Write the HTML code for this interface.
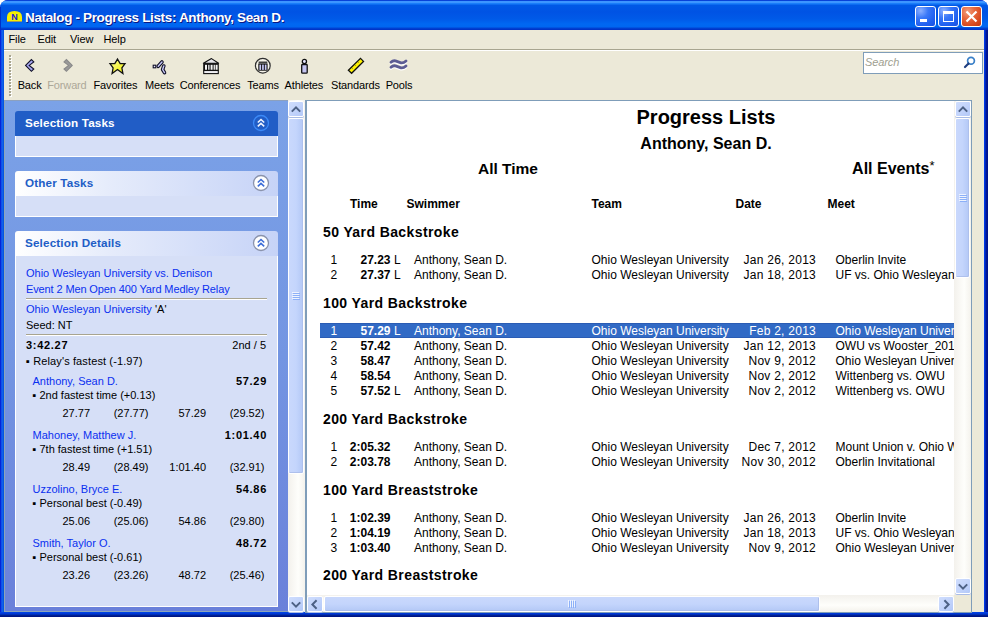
<!DOCTYPE html><html><head><meta charset="utf-8"><style>
html,body{margin:0;padding:0;}
body{width:988px;height:617px;overflow:hidden;position:relative;background:#fff;font-family:"Liberation Sans",sans-serif;}
.t{position:absolute;white-space:nowrap;}
.clip{position:absolute;overflow:hidden;}
svg{position:absolute;}
</style></head><body><div style="position:absolute;left:0px;top:0px;width:988px;height:617px;background:#0831D9;border-radius:8px 8px 0 0;"></div><div style="position:absolute;left:0px;top:24px;width:4px;height:593px;background:linear-gradient(90deg,#0019CF 0,#0A30E0 25%,#166EF5 50%,#0655E0 75%);"></div><div style="position:absolute;left:984px;top:24px;width:4px;height:593px;background:linear-gradient(90deg,#0040F0 0,#0030D8 25%,#001A9A 50%,#00108A 100%);"></div><div style="position:absolute;left:0px;top:612px;width:988px;height:5px;background:linear-gradient(180deg,#0045E8 0,#0035D0 40%,#00208F 70%,#000F80 100%);"></div><div style="position:absolute;left:0px;top:0px;width:988px;height:30px;border-radius:8px 8px 0 0;background:linear-gradient(180deg,#0842D8 0px,#0842D8 0.8px,#3D95FF 1.2px,#3D95FF 2.5px,#1A7EFA 3.5px,#0058E6 5.5px,#0053E4 12px,#005AE8 19px,#0068F2 24px,#0066F0 27px,#0045D5 28px,#0034C8 29.5px,#0034C8 30px);"></div><svg style="left:6px;top:10px" width="17" height="12" viewBox="0 0 17 12">
<path d="M1 11.5 L1 7 Q1 1 8.5 1 Q16 1 16 7 L16 11.5 Z" fill="#F6F000"/>
<path d="M1 11.5 L16 11.5" stroke="#A09860" stroke-width="1"/>
<text x="8.5" y="10" font-family="Liberation Sans" font-weight="bold" font-size="9" fill="#2020D8" text-anchor="middle">N</text>
</svg><div style="position:absolute;left:0px;top:7px;width:1px;height:23px;background:#0030C8;"></div><div class="t" style="top:11.00px;font-size:13.5px;line-height:13.5px;color:#fff;font-weight:bold;letter-spacing:-0.35px;left:25px;text-shadow:1px 1px 0 #0A1883;">Natalog - Progress Lists: Anthony, Sean D.</div><div style="position:absolute;left:915px;top:6px;width:21px;height:21px;box-sizing:border-box;border:1px solid #fff;border-radius:3px;background:radial-gradient(circle at 25% 20%,#8CB0FF 0,#3A78F8 35%,#2060F0 70%,#1A50E0 100%);"></div><div style="position:absolute;left:938px;top:6px;width:21px;height:21px;box-sizing:border-box;border:1px solid #fff;border-radius:3px;background:radial-gradient(circle at 25% 20%,#8CB0FF 0,#3A78F8 35%,#2060F0 70%,#1A50E0 100%);"></div><div style="position:absolute;left:961px;top:6px;width:21px;height:21px;box-sizing:border-box;border:1px solid #fff;border-radius:3px;background:radial-gradient(circle at 30% 25%,#F0A080 0,#E86A40 35%,#D84A20 70%,#C03810 100%);"></div><div style="position:absolute;left:920px;top:19px;width:7px;height:3px;background:#fff;"></div><div style="position:absolute;left:943px;top:11px;width:11px;height:11px;box-sizing:border-box;border:1.5px solid #fff;border-top-width:3px;"></div><svg style="left:965px;top:10px" width="13" height="13" viewBox="0 0 13 13"><path d="M1.5 1.5 L11.5 11.5 M11.5 1.5 L1.5 11.5" stroke="#fff" stroke-width="2.2"/></svg><div style="position:absolute;left:4px;top:30px;width:980px;height:70px;background:#ECE9D8;"></div><div style="position:absolute;left:4px;top:49px;width:980px;height:1px;background:#A8A590;"></div><div style="position:absolute;left:4px;top:50px;width:980px;height:1px;background:#fff;"></div><div class="t" style="top:34.00px;font-size:11px;line-height:11px;color:#000;letter-spacing:-0.1px;left:8.5px;">File</div><div class="t" style="top:34.00px;font-size:11px;line-height:11px;color:#000;letter-spacing:-0.1px;left:37.5px;">Edit</div><div class="t" style="top:34.00px;font-size:11px;line-height:11px;color:#000;letter-spacing:-0.1px;left:70px;">View</div><div class="t" style="top:34.00px;font-size:11px;line-height:11px;color:#000;letter-spacing:-0.1px;left:103.5px;">Help</div><div style="position:absolute;left:10px;top:56px;width:2px;height:2px;background:#fff;"></div><div style="position:absolute;left:9px;top:55px;width:2px;height:2px;background:#A8A590;"></div><div style="position:absolute;left:10px;top:59px;width:2px;height:2px;background:#fff;"></div><div style="position:absolute;left:9px;top:58px;width:2px;height:2px;background:#A8A590;"></div><div style="position:absolute;left:10px;top:62px;width:2px;height:2px;background:#fff;"></div><div style="position:absolute;left:9px;top:61px;width:2px;height:2px;background:#A8A590;"></div><div style="position:absolute;left:10px;top:65px;width:2px;height:2px;background:#fff;"></div><div style="position:absolute;left:9px;top:64px;width:2px;height:2px;background:#A8A590;"></div><div style="position:absolute;left:10px;top:68px;width:2px;height:2px;background:#fff;"></div><div style="position:absolute;left:9px;top:67px;width:2px;height:2px;background:#A8A590;"></div><div style="position:absolute;left:10px;top:71px;width:2px;height:2px;background:#fff;"></div><div style="position:absolute;left:9px;top:70px;width:2px;height:2px;background:#A8A590;"></div><div style="position:absolute;left:10px;top:74px;width:2px;height:2px;background:#fff;"></div><div style="position:absolute;left:9px;top:73px;width:2px;height:2px;background:#A8A590;"></div><div style="position:absolute;left:10px;top:77px;width:2px;height:2px;background:#fff;"></div><div style="position:absolute;left:9px;top:76px;width:2px;height:2px;background:#A8A590;"></div><div style="position:absolute;left:10px;top:80px;width:2px;height:2px;background:#fff;"></div><div style="position:absolute;left:9px;top:79px;width:2px;height:2px;background:#A8A590;"></div><div style="position:absolute;left:10px;top:83px;width:2px;height:2px;background:#fff;"></div><div style="position:absolute;left:9px;top:82px;width:2px;height:2px;background:#A8A590;"></div><div style="position:absolute;left:10px;top:86px;width:2px;height:2px;background:#fff;"></div><div style="position:absolute;left:9px;top:85px;width:2px;height:2px;background:#A8A590;"></div><div style="position:absolute;left:10px;top:89px;width:2px;height:2px;background:#fff;"></div><div style="position:absolute;left:9px;top:88px;width:2px;height:2px;background:#A8A590;"></div><div style="position:absolute;left:10px;top:92px;width:2px;height:2px;background:#fff;"></div><div style="position:absolute;left:9px;top:91px;width:2px;height:2px;background:#A8A590;"></div><div style="position:absolute;left:10px;top:95px;width:2px;height:2px;background:#fff;"></div><div style="position:absolute;left:9px;top:94px;width:2px;height:2px;background:#A8A590;"></div><div class="t" style="top:80.00px;font-size:11px;line-height:11px;color:#000;letter-spacing:-0.15px;left:17.7px;">Back</div><div class="t" style="top:80.00px;font-size:11px;line-height:11px;color:#ACA899;letter-spacing:-0.15px;left:47.3px;">Forward</div><div class="t" style="top:80.00px;font-size:11px;line-height:11px;color:#000;letter-spacing:-0.15px;left:93.5px;">Favorites</div><div class="t" style="top:80.00px;font-size:11px;line-height:11px;color:#000;letter-spacing:-0.15px;left:145px;">Meets</div><div class="t" style="top:80.00px;font-size:11px;line-height:11px;color:#000;letter-spacing:-0.15px;left:179.7px;">Conferences</div><div class="t" style="top:80.00px;font-size:11px;line-height:11px;color:#000;letter-spacing:-0.15px;left:247.2px;">Teams</div><div class="t" style="top:80.00px;font-size:11px;line-height:11px;color:#000;letter-spacing:-0.15px;left:284.6px;">Athletes</div><div class="t" style="top:80.00px;font-size:11px;line-height:11px;color:#000;letter-spacing:-0.15px;left:331px;">Standards</div><div class="t" style="top:80.00px;font-size:11px;line-height:11px;color:#000;letter-spacing:-0.15px;left:385.7px;">Pools</div><svg style="left:20px;top:55px" width="24" height="22" viewBox="0 0 24 22"><path d="M5.6 10.4 L11.4 4.5 L13.8 6.9 L9.2 10.4 L13.8 14 L11.4 16.3 Z" fill="#A8A8F2" stroke="#101028" stroke-width="1.1" stroke-linejoin="miter"/></svg><svg style="left:58px;top:55px" width="24" height="22" viewBox="0 0 24 22"><path d="M14.2 10.4 L8.4 4.5 L6 6.9 L10.6 10.4 L6 14 L8.4 16.3 Z" fill="#9A9A9A" stroke="#8A8A8A" stroke-width="1.1"/></svg><svg style="left:106px;top:55px" width="24" height="22" viewBox="0 0 24 22"><defs><linearGradient id="sg" x1="0" y1="0" x2="1" y2="1"><stop offset="0" stop-color="#FAFA9A"/><stop offset="1" stop-color="#F0F000"/></linearGradient></defs><path d="M11.5 4.1 L14.2 8.6 L19 8.6 L15.9 13 L16.9 18.6 L11.5 14.6 L6.1 18.6 L7.1 13 L4 8.6 L8.8 8.6 Z" fill="url(#sg)" stroke="#101010" stroke-width="1.3" stroke-linejoin="miter"/></svg><svg style="left:148px;top:55px" width="24" height="22" viewBox="0 0 24 22"><rect x="5.2" y="10.2" width="2.6" height="2.6" fill="#E8E8FF" stroke="#101028" stroke-width="1.1"/><path d="M10.2 11.3 L14 7" fill="none" stroke="#101028" stroke-width="3.6" stroke-linecap="round"/><path d="M10.2 11.3 L14 7" fill="none" stroke="#C8C8F8" stroke-width="1.4" stroke-linecap="round"/><path d="M15.8 11 L14.6 14.5 L16.5 17.6" fill="none" stroke="#101028" stroke-width="3.6" stroke-linecap="round" stroke-linejoin="round"/><path d="M15.8 11 L14.6 14.5 L16.5 17.6" fill="none" stroke="#C8C8F8" stroke-width="1.4" stroke-linecap="round" stroke-linejoin="round"/></svg><svg style="left:199px;top:55px" width="24" height="22" viewBox="0 0 24 22"><path d="M12.5 3.6 L19.6 8.2 L4.4 8.2 Z" fill="#E8E8EC" stroke="#101010" stroke-width="1.1" stroke-linejoin="round"/><rect x="4.2" y="8.2" width="15.6" height="7.3" fill="#101010"/><rect x="6" y="9.8" width="2" height="5" fill="#F4F4F4"/><rect x="9.2" y="9.8" width="1.3" height="5" fill="#F4F4F4"/><rect x="11.6" y="9.8" width="2" height="5" fill="#F4F4F4"/><rect x="14.6" y="9.8" width="1.3" height="5" fill="#F4F4F4"/><rect x="16.6" y="9.8" width="2" height="5" fill="#F4F4F4"/><rect x="4.7" y="15.5" width="14.6" height="3.1" fill="#F0F0F4" stroke="#101010" stroke-width="1.1"/></svg><svg style="left:251px;top:55px" width="24" height="22" viewBox="0 0 24 22"><circle cx="11.8" cy="10.7" r="7.4" fill="#F6F4EA" stroke="#303030" stroke-width="1.2"/><rect x="7.3" y="8.6" width="9.3" height="7.1" fill="#101010"/><rect x="7.6" y="6.5" width="8.7" height="2.1" fill="#404040"/><rect x="8.4" y="9.6" width="1.7" height="5.3" fill="#C8C8F4"/><rect x="11.1" y="9.6" width="1.7" height="5.3" fill="#C8C8F4"/><rect x="13.8" y="9.6" width="1.7" height="5.3" fill="#C8C8F4"/></svg><svg style="left:294px;top:55px" width="24" height="22" viewBox="0 0 24 22"><circle cx="10.4" cy="6.5" r="2.1" fill="#E8E8FF" stroke="#101010" stroke-width="1.3"/><rect x="7.7" y="9.5" width="5.5" height="8.7" rx="0.8" fill="#C4C4F0" stroke="#101010" stroke-width="1.3"/></svg><svg style="left:343px;top:55px" width="24" height="22" viewBox="0 0 24 22"><path d="M17.5 3.4 L20.5 6.4 L8.6 18.3 L5.4 15.3 Z" fill="#FFF200" stroke="#101010" stroke-width="1.3" stroke-linejoin="miter"/><path d="M9 13 L10 14 M12 10 L13 11 M15 7 L16 8" stroke="#8A8A40" stroke-width="0.8"/></svg><svg style="left:386px;top:55px" width="24" height="22" viewBox="0 0 24 22"><path d="M5 8.6 Q7 6.6 9.5 7.2 Q12.5 8.3 15 9.2 Q17.5 9.6 20 7.2" fill="none" stroke="#fff" stroke-width="2.6" stroke-linecap="round"/><path d="M5 13.6 Q7 11.6 9.5 12.2 Q12.5 13.3 15 14.2 Q17.5 14.6 20 12.2" fill="none" stroke="#fff" stroke-width="2.6" stroke-linecap="round"/><path d="M5 7.3 Q7 5.3 9.5 5.9 Q12.5 7 15 7.9 Q17.5 8.3 20 5.9" fill="none" stroke="#5C5C94" stroke-width="2.8" stroke-linecap="round"/><path d="M5 12.3 Q7 10.3 9.5 10.9 Q12.5 12 15 12.9 Q17.5 13.3 20 10.9" fill="none" stroke="#5C5C94" stroke-width="2.8" stroke-linecap="round"/></svg><div style="position:absolute;left:863px;top:52px;width:120px;height:22px;box-sizing:border-box;border:1px solid #7F9DB9;background:#fff;"></div><div class="t" style="top:57.00px;font-size:11px;line-height:11px;color:#A0A090;font-style:italic;letter-spacing:-0.1px;left:865px;">Search</div><svg style="left:962px;top:55px" width="15" height="15" viewBox="0 0 15 15"><circle cx="9" cy="5.8" r="3.4" fill="none" stroke="#3A80C8" stroke-width="1.7"/><path d="M6.5 8.5 L3 12" stroke="#1E3E80" stroke-width="2.2" stroke-linecap="round"/></svg><div style="position:absolute;left:4px;top:100px;width:284px;height:512px;background:linear-gradient(180deg,#7BA2E7 0,#7395E2 50%,#6A80DA 100%);"></div><div style="position:absolute;left:4px;top:100px;width:1px;height:512px;background:#8DA4B8;"></div><div style="position:absolute;left:4px;top:100px;width:284px;height:1px;background:#8CA0BE;"></div><div style="position:absolute;left:4px;top:611px;width:284px;height:1px;background:#8DA4B8;"></div><div style="position:absolute;left:15px;top:111px;width:263px;height:25px;border-radius:3px 3px 0 0;background:#215DC6;"></div><div class="t" style="top:117.00px;font-size:11.7px;line-height:11.7px;color:#fff;font-weight:bold;letter-spacing:0.15px;left:25px;">Selection Tasks</div><svg style="left:252px;top:114px" width="18" height="18" viewBox="0 0 18 18"><circle cx="9" cy="9" r="7.5" fill="#215DC6" stroke="#3C8AF8" stroke-width="1.3"/><path d="M5.8 8.5 L9 5.5 L12.2 8.5 M5.8 12.3 L9 9.3 L12.2 12.3" fill="none" stroke="#F0F4FF" stroke-width="1.6"/></svg><div style="position:absolute;left:15px;top:136px;width:263px;height:21px;box-sizing:border-box;border:1px solid #fff;border-top:0;background:#D6DFF7;"></div><div style="position:absolute;left:15px;top:171px;width:263px;height:25px;border-radius:3px 3px 0 0;background:linear-gradient(90deg,#FFFFFF 0,#E6ECFB 35%,#C6D3F7 100%);"></div><div class="t" style="top:177.00px;font-size:11.7px;line-height:11.7px;color:#215DC6;font-weight:bold;letter-spacing:0.15px;left:25px;">Other Tasks</div><svg style="left:252px;top:174px" width="18" height="18" viewBox="0 0 18 18"><circle cx="9" cy="9" r="7.5" fill="#FFFFFF" stroke="#8A93AC" stroke-width="1.3"/><path d="M5.8 8.5 L9 5.5 L12.2 8.5 M5.8 12.3 L9 9.3 L12.2 12.3" fill="none" stroke="#3E6ED8" stroke-width="1.6"/></svg><div style="position:absolute;left:15px;top:196px;width:263px;height:21px;box-sizing:border-box;border:1px solid #fff;border-top:0;background:#D6DFF7;"></div><div style="position:absolute;left:15px;top:231px;width:263px;height:25px;border-radius:3px 3px 0 0;background:linear-gradient(90deg,#FFFFFF 0,#E6ECFB 35%,#C6D3F7 100%);"></div><div class="t" style="top:237.00px;font-size:11.7px;line-height:11.7px;color:#215DC6;font-weight:bold;letter-spacing:0.15px;left:25px;">Selection Details</div><svg style="left:252px;top:234px" width="18" height="18" viewBox="0 0 18 18"><circle cx="9" cy="9" r="7.5" fill="#FFFFFF" stroke="#8A93AC" stroke-width="1.3"/><path d="M5.8 8.5 L9 5.5 L12.2 8.5 M5.8 12.3 L9 9.3 L12.2 12.3" fill="none" stroke="#3E6ED8" stroke-width="1.6"/></svg><div style="position:absolute;left:15px;top:256px;width:263px;height:351px;box-sizing:border-box;border:1px solid #fff;border-top:0;background:#D6DFF7;"></div><div class="t" style="top:268.00px;font-size:11px;line-height:11px;color:#0A30F0;letter-spacing:0px;left:26px;">Ohio Wesleyan University vs. Denison</div><div class="t" style="top:284.00px;font-size:11px;line-height:11px;color:#0A30F0;letter-spacing:-0.12px;left:26px;">Event 2 Men Open 400 Yard Medley Relay</div><div style="position:absolute;left:26px;top:298px;width:241px;height:1px;background:#A8A490;"></div><div style="position:absolute;left:26px;top:299px;width:241px;height:1px;background:#fff;"></div><div class="t" style="top:304.00px;font-size:11px;line-height:11px;color:#0A30F0;letter-spacing:0px;left:26px;">Ohio Wesleyan University</div><div class="t" style="top:304.00px;font-size:11px;line-height:11px;color:#000;letter-spacing:0px;left:155px;">'A'</div><div class="t" style="top:320.00px;font-size:11px;line-height:11px;color:#000;letter-spacing:0px;left:26px;">Seed: NT</div><div style="position:absolute;left:26px;top:334px;width:241px;height:1px;background:#A8A490;"></div><div style="position:absolute;left:26px;top:335px;width:241px;height:1px;background:#fff;"></div><div class="t" style="top:340.00px;font-size:11px;line-height:11px;color:#000;font-weight:bold;letter-spacing:0.7px;left:26px;">3:42.27</div><div class="t" style="top:340.00px;font-size:11px;line-height:11px;color:#000;letter-spacing:0px;left:-334px;width:600px;text-align:right;">2nd / 5</div><div class="t" style="top:356.00px;font-size:11px;line-height:11px;color:#000;letter-spacing:0.12px;left:26px;">&#9642; Relay's fastest (-1.97)</div><div class="t" style="top:376.00px;font-size:11px;line-height:11px;color:#0A30F0;letter-spacing:0px;left:32.5px;">Anthony, Sean D.</div><div class="t" style="top:376.00px;font-size:11px;line-height:11px;color:#000;font-weight:bold;letter-spacing:0.7px;left:-333px;width:600px;text-align:right;">57.29</div><div class="t" style="top:390.00px;font-size:11px;line-height:11px;color:#000;letter-spacing:0px;left:32.5px;">&#9642; 2nd fastest time (+0.13)</div><div class="t" style="top:408.00px;font-size:11px;line-height:11px;color:#000;letter-spacing:0px;left:-510px;width:600px;text-align:right;">27.77</div><div class="t" style="top:408.00px;font-size:11px;line-height:11px;color:#000;letter-spacing:0px;left:-451.5px;width:600px;text-align:right;">(27.77)</div><div class="t" style="top:408.00px;font-size:11px;line-height:11px;color:#000;letter-spacing:0px;left:-394px;width:600px;text-align:right;">57.29</div><div class="t" style="top:408.00px;font-size:11px;line-height:11px;color:#000;letter-spacing:0px;left:-335.5px;width:600px;text-align:right;">(29.52)</div><div class="t" style="top:430.00px;font-size:11px;line-height:11px;color:#0A30F0;letter-spacing:0px;left:32.5px;">Mahoney, Matthew J.</div><div class="t" style="top:430.00px;font-size:11px;line-height:11px;color:#000;font-weight:bold;letter-spacing:0.7px;left:-333px;width:600px;text-align:right;">1:01.40</div><div class="t" style="top:444.00px;font-size:11px;line-height:11px;color:#000;letter-spacing:0px;left:32.5px;">&#9642; 7th fastest time (+1.51)</div><div class="t" style="top:462.00px;font-size:11px;line-height:11px;color:#000;letter-spacing:0px;left:-510px;width:600px;text-align:right;">28.49</div><div class="t" style="top:462.00px;font-size:11px;line-height:11px;color:#000;letter-spacing:0px;left:-451.5px;width:600px;text-align:right;">(28.49)</div><div class="t" style="top:462.00px;font-size:11px;line-height:11px;color:#000;letter-spacing:0px;left:-394px;width:600px;text-align:right;">1:01.40</div><div class="t" style="top:462.00px;font-size:11px;line-height:11px;color:#000;letter-spacing:0px;left:-335.5px;width:600px;text-align:right;">(32.91)</div><div class="t" style="top:484.00px;font-size:11px;line-height:11px;color:#0A30F0;letter-spacing:0px;left:32.5px;">Uzzolino, Bryce E.</div><div class="t" style="top:484.00px;font-size:11px;line-height:11px;color:#000;font-weight:bold;letter-spacing:0.7px;left:-333px;width:600px;text-align:right;">54.86</div><div class="t" style="top:498.00px;font-size:11px;line-height:11px;color:#000;letter-spacing:0px;left:32.5px;">&#9642; Personal best (-0.49)</div><div class="t" style="top:516.00px;font-size:11px;line-height:11px;color:#000;letter-spacing:0px;left:-510px;width:600px;text-align:right;">25.06</div><div class="t" style="top:516.00px;font-size:11px;line-height:11px;color:#000;letter-spacing:0px;left:-451.5px;width:600px;text-align:right;">(25.06)</div><div class="t" style="top:516.00px;font-size:11px;line-height:11px;color:#000;letter-spacing:0px;left:-394px;width:600px;text-align:right;">54.86</div><div class="t" style="top:516.00px;font-size:11px;line-height:11px;color:#000;letter-spacing:0px;left:-335.5px;width:600px;text-align:right;">(29.80)</div><div class="t" style="top:538.00px;font-size:11px;line-height:11px;color:#0A30F0;letter-spacing:0px;left:32.5px;">Smith, Taylor O.</div><div class="t" style="top:538.00px;font-size:11px;line-height:11px;color:#000;font-weight:bold;letter-spacing:0.7px;left:-333px;width:600px;text-align:right;">48.72</div><div class="t" style="top:552.00px;font-size:11px;line-height:11px;color:#000;letter-spacing:0px;left:32.5px;">&#9642; Personal best (-0.61)</div><div class="t" style="top:570.00px;font-size:11px;line-height:11px;color:#000;letter-spacing:0px;left:-510px;width:600px;text-align:right;">23.26</div><div class="t" style="top:570.00px;font-size:11px;line-height:11px;color:#000;letter-spacing:0px;left:-451.5px;width:600px;text-align:right;">(23.26)</div><div class="t" style="top:570.00px;font-size:11px;line-height:11px;color:#000;letter-spacing:0px;left:-394px;width:600px;text-align:right;">48.72</div><div class="t" style="top:570.00px;font-size:11px;line-height:11px;color:#000;letter-spacing:0px;left:-335.5px;width:600px;text-align:right;">(25.46)</div><div style="position:absolute;left:288px;top:100px;width:17px;height:512px;background:linear-gradient(90deg,#F3F1EC 0,#FEFEFB 60%,#F4F2EC 100%);"></div><div style="position:absolute;left:288px;top:101px;width:16px;height:16px;box-sizing:border-box;border:1px solid #fff;border-radius:2px;background:linear-gradient(135deg,#CFDDFD 0,#C3D4FB 50%,#B2C8F8 100%);box-shadow:0 1px 0 #A9BCE6;"></div><svg style="left:289.0px;top:102.5px" width="14" height="13" viewBox="0 0 14 13"><path d="M2.8 8.6 L7 4.4 L11.2 8.6" fill="none" stroke="#4D6185" stroke-width="2"/></svg><div style="position:absolute;left:288px;top:118px;width:16px;height:356px;box-sizing:border-box;border:1px solid #fff;border-radius:2px;background:linear-gradient(90deg,#C9D8FC 0,#C4D5FC 50%,#B3C8F6 100%);box-shadow:inset -1px -1px 0 #AEC0EC;"></div><div style="position:absolute;left:292px;top:292px;width:7px;height:1px;background:#EEF3FE;"></div><div style="position:absolute;left:293px;top:293px;width:7px;height:1px;background:#8CB0F8;"></div><div style="position:absolute;left:292px;top:294px;width:7px;height:1px;background:#EEF3FE;"></div><div style="position:absolute;left:293px;top:295px;width:7px;height:1px;background:#8CB0F8;"></div><div style="position:absolute;left:292px;top:296px;width:7px;height:1px;background:#EEF3FE;"></div><div style="position:absolute;left:293px;top:297px;width:7px;height:1px;background:#8CB0F8;"></div><div style="position:absolute;left:292px;top:298px;width:7px;height:1px;background:#EEF3FE;"></div><div style="position:absolute;left:293px;top:299px;width:7px;height:1px;background:#8CB0F8;"></div><div style="position:absolute;left:288px;top:596px;width:16px;height:16px;box-sizing:border-box;border:1px solid #fff;border-radius:2px;background:linear-gradient(135deg,#CFDDFD 0,#C3D4FB 50%,#B2C8F8 100%);box-shadow:0 1px 0 #A9BCE6;"></div><svg style="left:289.0px;top:597.5px" width="14" height="13" viewBox="0 0 14 13"><path d="M2.8 4.4 L7 8.6 L11.2 4.4" fill="none" stroke="#4D6185" stroke-width="2"/></svg><div style="position:absolute;left:305px;top:100px;width:667px;height:513px;box-sizing:border-box;border:1px solid #7F9DB9;border-left-width:2px;background:#fff;"></div><div style="position:absolute;left:972px;top:100px;width:12px;height:512px;background:#ECE9D8;"></div><div style="position:absolute;left:954px;top:101px;width:17px;height:494px;background:linear-gradient(90deg,#F3F1EC 0,#FEFEFB 60%,#F4F2EC 100%);"></div><div style="position:absolute;left:955px;top:101px;width:16px;height:16px;box-sizing:border-box;border:1px solid #fff;border-radius:2px;background:linear-gradient(135deg,#CFDDFD 0,#C3D4FB 50%,#B2C8F8 100%);box-shadow:0 1px 0 #A9BCE6;"></div><svg style="left:956.0px;top:102.5px" width="14" height="13" viewBox="0 0 14 13"><path d="M2.8 8.6 L7 4.4 L11.2 8.6" fill="none" stroke="#4D6185" stroke-width="2"/></svg><div style="position:absolute;left:955px;top:118px;width:15px;height:160px;box-sizing:border-box;border:1px solid #fff;border-radius:2px;background:linear-gradient(90deg,#C9D8FC 0,#C4D5FC 50%,#B3C8F6 100%);box-shadow:inset -1px -1px 0 #AEC0EC;"></div><div style="position:absolute;left:959px;top:194px;width:7px;height:1px;background:#EEF3FE;"></div><div style="position:absolute;left:960px;top:195px;width:7px;height:1px;background:#8CB0F8;"></div><div style="position:absolute;left:959px;top:196px;width:7px;height:1px;background:#EEF3FE;"></div><div style="position:absolute;left:960px;top:197px;width:7px;height:1px;background:#8CB0F8;"></div><div style="position:absolute;left:959px;top:198px;width:7px;height:1px;background:#EEF3FE;"></div><div style="position:absolute;left:960px;top:199px;width:7px;height:1px;background:#8CB0F8;"></div><div style="position:absolute;left:959px;top:200px;width:7px;height:1px;background:#EEF3FE;"></div><div style="position:absolute;left:960px;top:201px;width:7px;height:1px;background:#8CB0F8;"></div><div style="position:absolute;left:955px;top:578px;width:16px;height:16px;box-sizing:border-box;border:1px solid #fff;border-radius:2px;background:linear-gradient(135deg,#CFDDFD 0,#C3D4FB 50%,#B2C8F8 100%);box-shadow:0 1px 0 #A9BCE6;"></div><svg style="left:956.0px;top:579.5px" width="14" height="13" viewBox="0 0 14 13"><path d="M2.8 4.4 L7 8.6 L11.2 4.4" fill="none" stroke="#4D6185" stroke-width="2"/></svg><div style="position:absolute;left:307px;top:595px;width:647px;height:17px;background:linear-gradient(180deg,#F3F1EC 0,#FEFEFB 60%,#F4F2EC 100%);"></div><div style="position:absolute;left:307px;top:596px;width:16px;height:16px;box-sizing:border-box;border:1px solid #fff;border-radius:2px;background:linear-gradient(135deg,#CFDDFD 0,#C3D4FB 50%,#B2C8F8 100%);box-shadow:0 1px 0 #A9BCE6;"></div><svg style="left:308.0px;top:597.5px" width="14" height="13" viewBox="0 0 14 13"><path d="M8.6 2.3 L4.4 6.5 L8.6 10.7" fill="none" stroke="#4D6185" stroke-width="2"/></svg><div style="position:absolute;left:324px;top:596px;width:496px;height:16px;box-sizing:border-box;border:1px solid #fff;border-radius:2px;background:linear-gradient(180deg,#C9D8FC 0,#C4D5FC 50%,#B3C8F6 100%);box-shadow:inset -1px -1px 0 #AEC0EC;"></div><div style="position:absolute;left:568px;top:600px;width:1px;height:7px;background:#EEF3FE;"></div><div style="position:absolute;left:569px;top:601px;width:1px;height:7px;background:#8CB0F8;"></div><div style="position:absolute;left:570px;top:600px;width:1px;height:7px;background:#EEF3FE;"></div><div style="position:absolute;left:571px;top:601px;width:1px;height:7px;background:#8CB0F8;"></div><div style="position:absolute;left:572px;top:600px;width:1px;height:7px;background:#EEF3FE;"></div><div style="position:absolute;left:573px;top:601px;width:1px;height:7px;background:#8CB0F8;"></div><div style="position:absolute;left:574px;top:600px;width:1px;height:7px;background:#EEF3FE;"></div><div style="position:absolute;left:575px;top:601px;width:1px;height:7px;background:#8CB0F8;"></div><div style="position:absolute;left:938px;top:596px;width:16px;height:16px;box-sizing:border-box;border:1px solid #fff;border-radius:2px;background:linear-gradient(135deg,#CFDDFD 0,#C3D4FB 50%,#B2C8F8 100%);box-shadow:0 1px 0 #A9BCE6;"></div><svg style="left:939.0px;top:597.5px" width="14" height="13" viewBox="0 0 14 13"><path d="M5.4 2.3 L9.6 6.5 L5.4 10.7" fill="none" stroke="#4D6185" stroke-width="2"/></svg><div style="position:absolute;left:954px;top:595px;width:17px;height:17px;background:#ECE9D8;"></div><div class="clip" style="left:307px;top:101px;width:647px;height:494px;"><div class="t" style="top:6.00px;font-size:20px;line-height:20px;color:#000;font-weight:bold;left:-101px;width:1000px;text-align:center;">Progress Lists</div><div class="t" style="top:35.00px;font-size:16px;line-height:16px;color:#000;font-weight:bold;left:-101px;width:1000px;text-align:center;">Anthony, Sean D.</div><div class="t" style="top:60.00px;font-size:15.5px;line-height:15.5px;color:#000;font-weight:bold;left:-299px;width:1000px;text-align:center;">All Time</div><div class="t" style="top:60.00px;font-size:16px;line-height:16px;color:#000;font-weight:bold;left:27.5px;width:600px;text-align:right;">All Events<span style="font-size:13px;font-weight:normal;position:relative;top:-4px">*</span></div><div class="t" style="top:97.00px;font-size:12px;line-height:12px;color:#000;font-weight:bold;left:43px;">Time</div><div class="t" style="top:97.00px;font-size:12px;line-height:12px;color:#000;font-weight:bold;left:99.5px;">Swimmer</div><div class="t" style="top:97.00px;font-size:12px;line-height:12px;color:#000;font-weight:bold;left:284.5px;">Team</div><div class="t" style="top:97.00px;font-size:12px;line-height:12px;color:#000;font-weight:bold;left:428.5px;">Date</div><div class="t" style="top:97.00px;font-size:12px;line-height:12px;color:#000;font-weight:bold;left:520.5px;">Meet</div><div class="t" style="top:124.00px;font-size:14px;line-height:14px;color:#000;font-weight:bold;letter-spacing:0.4px;left:16px;">50 Yard Backstroke</div><div class="t" style="top:153.00px;font-size:12px;line-height:12px;color:#000;left:23.5px;">1</div><div class="t" style="top:153.00px;font-size:12px;line-height:12px;color:#000;font-weight:bold;left:-516.5px;width:600px;text-align:right;">27.23</div><div class="t" style="top:153.00px;font-size:12px;line-height:12px;color:#000;left:87px;">L</div><div class="t" style="top:153.00px;font-size:12px;line-height:12px;color:#000;left:107px;">Anthony, Sean D.</div><div class="t" style="top:153.00px;font-size:12px;line-height:12px;color:#000;left:284.5px;">Ohio Wesleyan University</div><div class="t" style="top:153.00px;font-size:12px;line-height:12px;color:#000;letter-spacing:0.25px;left:-91px;width:600px;text-align:right;">Jan 26, 2013</div><div class="t" style="top:153.00px;font-size:12px;line-height:12px;color:#000;left:528.5px;">Oberlin Invite</div><div class="t" style="top:168.00px;font-size:12px;line-height:12px;color:#000;left:23.5px;">2</div><div class="t" style="top:168.00px;font-size:12px;line-height:12px;color:#000;font-weight:bold;left:-516.5px;width:600px;text-align:right;">27.37</div><div class="t" style="top:168.00px;font-size:12px;line-height:12px;color:#000;left:87px;">L</div><div class="t" style="top:168.00px;font-size:12px;line-height:12px;color:#000;left:107px;">Anthony, Sean D.</div><div class="t" style="top:168.00px;font-size:12px;line-height:12px;color:#000;left:284.5px;">Ohio Wesleyan University</div><div class="t" style="top:168.00px;font-size:12px;line-height:12px;color:#000;letter-spacing:0.25px;left:-91px;width:600px;text-align:right;">Jan 18, 2013</div><div class="t" style="top:168.00px;font-size:12px;line-height:12px;color:#000;left:528.5px;">UF vs. Ohio Wesleyan</div><div class="t" style="top:195.00px;font-size:14px;line-height:14px;color:#000;font-weight:bold;letter-spacing:0.4px;left:16px;">100 Yard Backstroke</div><div style="position:absolute;left:13px;top:222px;width:634px;height:15px;background:#316AC5;box-shadow:inset 0 1px 0 #2A5CB4, inset 0 -1px 0 #2A5CB4;"></div><div class="t" style="top:224.00px;font-size:12px;line-height:12px;color:#fff;left:23.5px;">1</div><div class="t" style="top:224.00px;font-size:12px;line-height:12px;color:#fff;font-weight:bold;left:-516.5px;width:600px;text-align:right;">57.29</div><div class="t" style="top:224.00px;font-size:12px;line-height:12px;color:#fff;left:87px;">L</div><div class="t" style="top:224.00px;font-size:12px;line-height:12px;color:#fff;left:107px;">Anthony, Sean D.</div><div class="t" style="top:224.00px;font-size:12px;line-height:12px;color:#fff;left:284.5px;">Ohio Wesleyan University</div><div class="t" style="top:224.00px;font-size:12px;line-height:12px;color:#fff;letter-spacing:0.25px;left:-91px;width:600px;text-align:right;">Feb 2, 2013</div><div class="t" style="top:224.00px;font-size:12px;line-height:12px;color:#fff;left:528.5px;">Ohio Wesleyan University</div><div class="t" style="top:239.00px;font-size:12px;line-height:12px;color:#000;left:23.5px;">2</div><div class="t" style="top:239.00px;font-size:12px;line-height:12px;color:#000;font-weight:bold;left:-516.5px;width:600px;text-align:right;">57.42</div><div class="t" style="top:239.00px;font-size:12px;line-height:12px;color:#000;left:107px;">Anthony, Sean D.</div><div class="t" style="top:239.00px;font-size:12px;line-height:12px;color:#000;left:284.5px;">Ohio Wesleyan University</div><div class="t" style="top:239.00px;font-size:12px;line-height:12px;color:#000;letter-spacing:0.25px;left:-91px;width:600px;text-align:right;">Jan 12, 2013</div><div class="t" style="top:239.00px;font-size:12px;line-height:12px;color:#000;left:528.5px;">OWU vs Wooster_2013</div><div class="t" style="top:254.00px;font-size:12px;line-height:12px;color:#000;left:23.5px;">3</div><div class="t" style="top:254.00px;font-size:12px;line-height:12px;color:#000;font-weight:bold;left:-516.5px;width:600px;text-align:right;">58.47</div><div class="t" style="top:254.00px;font-size:12px;line-height:12px;color:#000;left:107px;">Anthony, Sean D.</div><div class="t" style="top:254.00px;font-size:12px;line-height:12px;color:#000;left:284.5px;">Ohio Wesleyan University</div><div class="t" style="top:254.00px;font-size:12px;line-height:12px;color:#000;letter-spacing:0.25px;left:-91px;width:600px;text-align:right;">Nov 9, 2012</div><div class="t" style="top:254.00px;font-size:12px;line-height:12px;color:#000;left:528.5px;">Ohio Wesleyan University</div><div class="t" style="top:269.00px;font-size:12px;line-height:12px;color:#000;left:23.5px;">4</div><div class="t" style="top:269.00px;font-size:12px;line-height:12px;color:#000;font-weight:bold;left:-516.5px;width:600px;text-align:right;">58.54</div><div class="t" style="top:269.00px;font-size:12px;line-height:12px;color:#000;left:107px;">Anthony, Sean D.</div><div class="t" style="top:269.00px;font-size:12px;line-height:12px;color:#000;left:284.5px;">Ohio Wesleyan University</div><div class="t" style="top:269.00px;font-size:12px;line-height:12px;color:#000;letter-spacing:0.25px;left:-91px;width:600px;text-align:right;">Nov 2, 2012</div><div class="t" style="top:269.00px;font-size:12px;line-height:12px;color:#000;left:528.5px;">Wittenberg vs. OWU</div><div class="t" style="top:284.00px;font-size:12px;line-height:12px;color:#000;left:23.5px;">5</div><div class="t" style="top:284.00px;font-size:12px;line-height:12px;color:#000;font-weight:bold;left:-516.5px;width:600px;text-align:right;">57.52</div><div class="t" style="top:284.00px;font-size:12px;line-height:12px;color:#000;left:87px;">L</div><div class="t" style="top:284.00px;font-size:12px;line-height:12px;color:#000;left:107px;">Anthony, Sean D.</div><div class="t" style="top:284.00px;font-size:12px;line-height:12px;color:#000;left:284.5px;">Ohio Wesleyan University</div><div class="t" style="top:284.00px;font-size:12px;line-height:12px;color:#000;letter-spacing:0.25px;left:-91px;width:600px;text-align:right;">Nov 2, 2012</div><div class="t" style="top:284.00px;font-size:12px;line-height:12px;color:#000;left:528.5px;">Wittenberg vs. OWU</div><div class="t" style="top:311.00px;font-size:14px;line-height:14px;color:#000;font-weight:bold;letter-spacing:0.4px;left:16px;">200 Yard Backstroke</div><div class="t" style="top:340.00px;font-size:12px;line-height:12px;color:#000;left:23.5px;">1</div><div class="t" style="top:340.00px;font-size:12px;line-height:12px;color:#000;font-weight:bold;left:-516.5px;width:600px;text-align:right;">2:05.32</div><div class="t" style="top:340.00px;font-size:12px;line-height:12px;color:#000;left:107px;">Anthony, Sean D.</div><div class="t" style="top:340.00px;font-size:12px;line-height:12px;color:#000;left:284.5px;">Ohio Wesleyan University</div><div class="t" style="top:340.00px;font-size:12px;line-height:12px;color:#000;letter-spacing:0.25px;left:-91px;width:600px;text-align:right;">Dec 7, 2012</div><div class="t" style="top:340.00px;font-size:12px;line-height:12px;color:#000;left:528.5px;">Mount Union v. Ohio Wesleyan</div><div class="t" style="top:355.00px;font-size:12px;line-height:12px;color:#000;left:23.5px;">2</div><div class="t" style="top:355.00px;font-size:12px;line-height:12px;color:#000;font-weight:bold;left:-516.5px;width:600px;text-align:right;">2:03.78</div><div class="t" style="top:355.00px;font-size:12px;line-height:12px;color:#000;left:107px;">Anthony, Sean D.</div><div class="t" style="top:355.00px;font-size:12px;line-height:12px;color:#000;left:284.5px;">Ohio Wesleyan University</div><div class="t" style="top:355.00px;font-size:12px;line-height:12px;color:#000;letter-spacing:0.25px;left:-91px;width:600px;text-align:right;">Nov 30, 2012</div><div class="t" style="top:355.00px;font-size:12px;line-height:12px;color:#000;left:528.5px;">Oberlin Invitational</div><div class="t" style="top:382.00px;font-size:14px;line-height:14px;color:#000;font-weight:bold;letter-spacing:0.4px;left:16px;">100 Yard Breaststroke</div><div class="t" style="top:411.00px;font-size:12px;line-height:12px;color:#000;left:23.5px;">1</div><div class="t" style="top:411.00px;font-size:12px;line-height:12px;color:#000;font-weight:bold;left:-516.5px;width:600px;text-align:right;">1:02.39</div><div class="t" style="top:411.00px;font-size:12px;line-height:12px;color:#000;left:107px;">Anthony, Sean D.</div><div class="t" style="top:411.00px;font-size:12px;line-height:12px;color:#000;left:284.5px;">Ohio Wesleyan University</div><div class="t" style="top:411.00px;font-size:12px;line-height:12px;color:#000;letter-spacing:0.25px;left:-91px;width:600px;text-align:right;">Jan 26, 2013</div><div class="t" style="top:411.00px;font-size:12px;line-height:12px;color:#000;left:528.5px;">Oberlin Invite</div><div class="t" style="top:426.00px;font-size:12px;line-height:12px;color:#000;left:23.5px;">2</div><div class="t" style="top:426.00px;font-size:12px;line-height:12px;color:#000;font-weight:bold;left:-516.5px;width:600px;text-align:right;">1:04.19</div><div class="t" style="top:426.00px;font-size:12px;line-height:12px;color:#000;left:107px;">Anthony, Sean D.</div><div class="t" style="top:426.00px;font-size:12px;line-height:12px;color:#000;left:284.5px;">Ohio Wesleyan University</div><div class="t" style="top:426.00px;font-size:12px;line-height:12px;color:#000;letter-spacing:0.25px;left:-91px;width:600px;text-align:right;">Jan 18, 2013</div><div class="t" style="top:426.00px;font-size:12px;line-height:12px;color:#000;left:528.5px;">UF vs. Ohio Wesleyan</div><div class="t" style="top:441.00px;font-size:12px;line-height:12px;color:#000;left:23.5px;">3</div><div class="t" style="top:441.00px;font-size:12px;line-height:12px;color:#000;font-weight:bold;left:-516.5px;width:600px;text-align:right;">1:03.40</div><div class="t" style="top:441.00px;font-size:12px;line-height:12px;color:#000;left:107px;">Anthony, Sean D.</div><div class="t" style="top:441.00px;font-size:12px;line-height:12px;color:#000;left:284.5px;">Ohio Wesleyan University</div><div class="t" style="top:441.00px;font-size:12px;line-height:12px;color:#000;letter-spacing:0.25px;left:-91px;width:600px;text-align:right;">Nov 9, 2012</div><div class="t" style="top:441.00px;font-size:12px;line-height:12px;color:#000;left:528.5px;">Ohio Wesleyan University</div><div class="t" style="top:467.00px;font-size:14px;line-height:14px;color:#000;font-weight:bold;letter-spacing:0.4px;left:16px;">200 Yard Breaststroke</div></div></body></html>
